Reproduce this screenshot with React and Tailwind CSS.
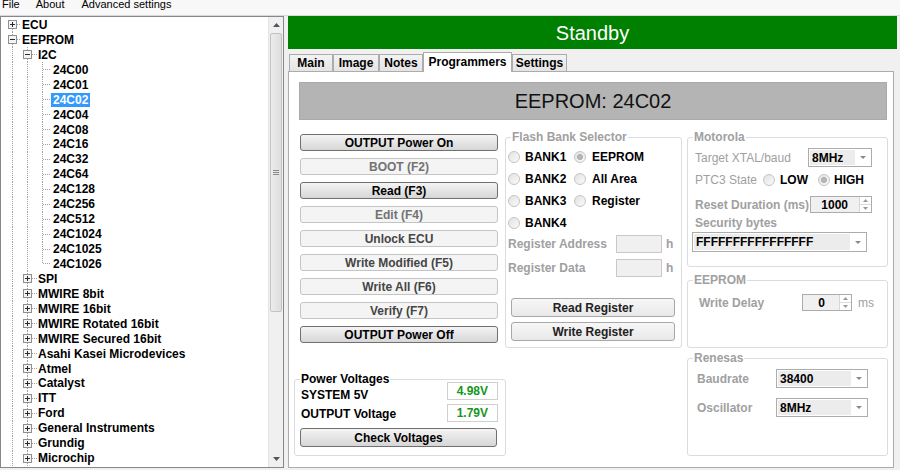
import React from "react";

const TREE = [
  { t: "ECU", l: 1, e: "+" },
  { t: "EEPROM", l: 1, e: "-" },
  { t: "I2C", l: 2, e: "-" },
  { t: "24C00", l: 3 },
  { t: "24C01", l: 3 },
  { t: "24C02", l: 3, sel: true },
  { t: "24C04", l: 3 },
  { t: "24C08", l: 3 },
  { t: "24C16", l: 3 },
  { t: "24C32", l: 3 },
  { t: "24C64", l: 3 },
  { t: "24C128", l: 3 },
  { t: "24C256", l: 3 },
  { t: "24C512", l: 3 },
  { t: "24C1024", l: 3 },
  { t: "24C1025", l: 3 },
  { t: "24C1026", l: 3, last: true },
  { t: "SPI", l: 2, e: "+" },
  { t: "MWIRE 8bit", l: 2, e: "+" },
  { t: "MWIRE 16bit", l: 2, e: "+" },
  { t: "MWIRE Rotated 16bit", l: 2, e: "+" },
  { t: "MWIRE Secured 16bit", l: 2, e: "+" },
  { t: "Asahi Kasei Microdevices", l: 2, e: "+" },
  { t: "Atmel", l: 2, e: "+" },
  { t: "Catalyst", l: 2, e: "+" },
  { t: "ITT", l: 2, e: "+" },
  { t: "Ford", l: 2, e: "+" },
  { t: "General Instruments", l: 2, e: "+" },
  { t: "Grundig", l: 2, e: "+" },
  { t: "Microchip", l: 2, e: "+" },
];

function TreeLines({ row, i }) {
  const w = row.l === 1 ? 20 : row.l === 2 ? 36 : 50;
  const cx = row.l === 1 ? 11.5 : 26.5;
  const dot = { stroke: "#a0a0a0", strokeWidth: 1, strokeDasharray: "1 1" };
  return (
    <svg width={w} height="15" className="shrink-0 block" shapeRendering="crispEdges">
      <line x1="11.5" x2="11.5" y1={i === 0 ? 7.5 : 0} y2="15" {...dot} />
      {i >= 2 && <line x1="26.5" x2="26.5" y1="0" y2="15" {...dot} />}
      {row.l === 3 && <line x1="41.5" x2="41.5" y1="0" y2={row.last ? 7.5 : 15} {...dot} />}
      {row.l === 1 && <line x1="16" x2="20" y1="7.5" y2="7.5" {...dot} />}
      {row.l === 2 && <line x1="31" x2="36" y1="7.5" y2="7.5" {...dot} />}
      {row.l === 3 && <line x1="42" x2="50" y1="7.5" y2="7.5" {...dot} />}
      {row.e && (
        <g>
          <rect x={cx - 4} y="3.5" width="8" height="8" fill="#f4f4f4" stroke="#8f8f8f" />
          <line x1={cx - 2.5} x2={cx + 2.5} y1="7.5" y2="7.5" stroke="#2a2a2a" />
          {row.e === "+" && <line x1={cx} x2={cx} y1="5" y2="10" stroke="#2a2a2a" />}
        </g>
      )}
    </svg>
  );
}

function Tree() {
  return (
    <div className="w-[284px] h-[452px] bg-white border border-[#828790] flex">
      <div className="flex-1 overflow-hidden pt-[0.5px]">
        {TREE.map((row, i) => (
          <div key={row.t} className="flex items-center h-[14.94px]">
            <TreeLines row={row} i={i} />
            <span
              className={`leading-[14px] font-bold text-[12px] whitespace-nowrap ${
                row.l === 3 ? "px-[2px]" : "pl-[1px]"
              } ${row.sel ? "bg-[#3399ff] text-white" : "text-black"}`}
            >
              {row.t}
            </span>
          </div>
        ))}
      </div>
      <div className="w-[15px] border-l border-[#e3e3e3] bg-[#f0f0f0] flex flex-col">
        <div className="h-[16px] flex items-center justify-center">
          <svg width="7" height="4"><path d="M0 4h7L3.5 0z" fill="#555" /></svg>
        </div>
        <div className="h-[279px] mx-[1px] rounded-[2px] border border-[#c3c3c3] bg-linear-to-r from-[#ececec] to-[#dedede] flex items-center justify-center">
          <svg width="6" height="5" className="mt-[-1px]">
            <path d="M0 0.5h6M0 2.5h6M0 4.5h6" stroke="#8a8a8a" strokeWidth="1" />
          </svg>
        </div>
        <div className="flex-1" />
        <div className="h-[16px] flex items-center justify-center">
          <svg width="7" height="4"><path d="M0 0h7L3.5 4z" fill="#555" /></svg>
        </div>
      </div>
    </div>
  );
}

const BTN = {
  on: "border-[#707070] bg-linear-to-b from-[#f4f4f4] to-[#d6d6d6] text-black",
  off: "border-[#c4c4c4] bg-[#f4f4f4] text-[#727272]",
  dim: "border-[#c4c4c4] bg-[#f4f4f4] text-[#454545]",
  mid: "border-[#a8a8a8] bg-linear-to-b from-[#f7f7f7] to-[#e8e8e8] text-[#222]",
};

function Btn({ children, kind = "on", className = "" }) {
  return (
    <div
      className={`flex items-center justify-center border rounded-[3px] font-bold text-[12px] leading-none ${BTN[kind]} ${className}`}
    >
      {children}
    </div>
  );
}

function Group({ title, dark, className = "", children }) {
  return (
    <div className={`relative border border-[#d8dde2] rounded-[3px] ${className}`}>
      <span
        className={`absolute -top-[8px] left-[5px] bg-white px-[1px] text-[12px] leading-[14px] font-bold ${
          dark ? "text-black" : "text-[#a0a0a0]"
        }`}
      >
        {title}
      </span>
      {children}
    </div>
  );
}

function Radio({ checked }) {
  return (
    <span className="w-[12px] h-[12px] rounded-full border border-[#c4c4c4] bg-linear-to-br from-[#e2e2e2] to-[#fafafa] flex items-center justify-center shrink-0">
      {checked && <span className="w-[6px] h-[6px] rounded-full border border-[#a8a8a8] bg-[#b8b8b8]" />}
    </span>
  );
}

function Combo({ value, className = "" }) {
  return (
    <div className={`flex border border-[#acacac] bg-white ${className}`}>
      <div className="flex-1 bg-[#ececec] m-[1px] mr-0 flex items-center pl-[2px] font-bold text-[12px] leading-none text-black">
        {value}
      </div>
      <div className="w-[16px] flex items-center justify-center">
        <svg width="6" height="3"><path d="M0 0h6L3 3z" fill="#8a8a8a" /></svg>
      </div>
    </div>
  );
}

function Num({ value, pad = "pr-[11px]", className = "" }) {
  return (
    <div className={`flex border border-[#acacac] bg-[#f0f0f0] ${className}`}>
      <div className={`flex-1 flex items-center justify-end font-bold text-[12px] leading-none text-black ${pad}`}>
        {value}
      </div>
      <div className="w-[12px] flex flex-col border-l border-[#d6d6d6] bg-white">
        <div className="flex-1 flex items-center justify-center border-b border-[#dcdcdc]">
          <svg width="5" height="3"><path d="M0 3h5L2.5 0z" fill="#9a9a9a" /></svg>
        </div>
        <div className="flex-1 flex items-center justify-center">
          <svg width="5" height="3"><path d="M0 0h5L2.5 3z" fill="#9a9a9a" /></svg>
        </div>
      </div>
    </div>
  );
}

const gray = "text-[12px] leading-[14px] font-bold text-[#a0a0a0] whitespace-nowrap";
const grayReg = "text-[12px] leading-[14px] text-[#a0a0a0] whitespace-nowrap";
const blk = "text-[12px] leading-[14px] font-bold text-black whitespace-nowrap";

function FlashBank() {
  const rows = [
    ["BANK1", "EEPROM", true],
    ["BANK2", "All Area", false],
    ["BANK3", "Register", false],
    ["BANK4", null, false],
  ];
  return (
    <Group title="Flash Bank Selector" className="mt-[17px] w-[177px] h-[211px]">
      <div className="pt-[8px] pl-[2px]">
        {rows.map(([a, b, chk]) => (
          <div key={a} className="flex items-center h-[22px]">
            <div className="w-[66px] flex items-center gap-[5px]">
              <Radio />
              <span className={blk}>{a}</span>
            </div>
            {b && (
              <div className="flex items-center gap-[6px]">
                <Radio checked={chk} />
                <span className={blk}>{b}</span>
              </div>
            )}
          </div>
        ))}
        <div className="mt-[1px] flex items-center h-[18px]">
          <span className={`${gray} w-[108px]`}>Register Address</span>
          <div className="w-[46px] h-[18px] border border-[#c9c9c9] bg-[#f0f0f0]" />
          <span className={`${gray} ml-[4px]`}>h</span>
        </div>
        <div className="mt-[6px] flex items-center h-[18px]">
          <span className={`${gray} w-[108px]`}>Register Data</span>
          <div className="w-[46px] h-[18px] border border-[#c9c9c9] bg-[#f0f0f0]" />
          <span className={`${gray} ml-[4px]`}>h</span>
        </div>
      </div>
      <Btn kind="mid" className="mt-[21px] ml-[5px] w-[164px] h-[19px]">Read Register</Btn>
      <Btn kind="mid" className="mt-[5px] ml-[5px] w-[164px] h-[19px]">Write Register</Btn>
    </Group>
  );
}

function RightGroups() {
  return (
    <div className="ml-[5px] w-[201px] flex flex-col">
      <Group title="Motorola" className="mt-[17px] h-[130px]">
        <div className="mt-[10px] flex items-center h-[19px] pl-[7px]">
          <span className={`${grayReg} w-[113px]`}>Target XTAL/baud</span>
          <Combo value="8MHz" className="w-[64px] h-[19px]" />
        </div>
        <div className="mt-[4px] flex items-center h-[18px] pl-[7px]">
          <span className={`${grayReg} w-[68px]`}>PTC3 State</span>
          <Radio />
          <span className={`${blk} ml-[5px]`}>LOW</span>
          <span className="ml-[10px]">
            <Radio checked />
          </span>
          <span className={`${blk} ml-[4px]`}>HIGH</span>
        </div>
        <div className="mt-[7px] flex items-center h-[17px] pl-[7px]">
          <span className={`${gray} w-[115px]`}>Reset Duration (ms)</span>
          <Num value="1000" className="w-[62px] h-[17px]" />
        </div>
        <div className={`mt-[3px] h-[14px] pl-[7px] ${gray}`}>Security bytes</div>
        <Combo value="FFFFFFFFFFFFFFFF" className="mt-[2px] ml-[4px] w-[175px] h-[20px]" />
      </Group>
      <Group title="EEPROM" className="mt-[13px] h-[68px]">
        <div className="mt-[13px] flex items-center h-[17px] pl-[11px]">
          <span className={`${gray} w-[103px]`}>Write Delay</span>
          <Num value="0" pad="pr-[14px]" className="w-[50px] h-[17px]" />
          <span className={`${grayReg} ml-[6px]`}>ms</span>
        </div>
      </Group>
      <Group title="Renesas" className="mt-[10px] h-[98px]">
        <div className="mt-[10px] flex items-center h-[19px] pl-[9px]">
          <span className={`${gray} w-[79px]`}>Baudrate</span>
          <Combo value="38400" className="w-[92px] h-[19px]" />
        </div>
        <div className="mt-[10px] flex items-center h-[19px] pl-[9px]">
          <span className={`${gray} w-[79px]`}>Oscillator</span>
          <Combo value="8MHz" className="w-[92px] h-[19px]" />
        </div>
      </Group>
    </div>
  );
}

function LeftColumn() {
  const btns = [
    ["OUTPUT Power On", "on"],
    ["BOOT (F2)", "off"],
    ["Read (F3)", "on"],
    ["Edit (F4)", "off"],
    ["Unlock ECU", "dim"],
    ["Write Modified (F5)", "dim"],
    ["Write All (F6)", "dim"],
    ["Verify (F7)", "dim"],
    ["OUTPUT Power Off", "on"],
  ];
  return (
    <div className="w-[211px] flex flex-col shrink-0">
      <div className="mt-[14px] ml-[6px] w-[198px] flex flex-col gap-[7px]">
        {btns.map(([t, k]) => (
          <Btn key={t} kind={k} className="h-[17px]">
            {t}
          </Btn>
        ))}
      </div>
      <Group title="Power Voltages" dark className="mt-[36px] w-[212px] h-[77px]">
        <div className="mt-[2px] flex items-start h-[18px] pl-[6px] pr-[7px]">
          <span className={`${blk} flex-1 mt-[6px]`}>SYSTEM 5V</span>
          <div className="w-[51px] h-[18px] border border-[#cfcfcf] bg-white flex items-center justify-end pr-[9px] font-bold text-[12px] leading-none text-[#15961a]">
            4.98V
          </div>
        </div>
        <div className="mt-[4px] flex items-start h-[18px] pl-[6px] pr-[7px]">
          <span className={`${blk} flex-1 mt-[3px]`}>OUTPUT Voltage</span>
          <div className="w-[51px] h-[18px] border border-[#cfcfcf] bg-white flex items-center justify-end pr-[9px] font-bold text-[12px] leading-none text-[#15961a]">
            1.79V
          </div>
        </div>
        <Btn kind="on" className="mt-[6px] ml-[5px] w-[197px] h-[19px]">
          Check Voltages
        </Btn>
      </Group>
    </div>
  );
}

function Tabs() {
  const tabs = [
    ["Main", "w-[44px]"],
    ["Image", "w-[46px]"],
    ["Notes", "w-[44px]"],
    ["Programmers", "w-[89px]", true],
    ["Settings", "w-[55px]"],
  ];
  return (
    <div className="mt-[3px] h-[19px] flex items-end pl-[1px] relative z-10">
      {tabs.map(([t, w, active]) =>
        active ? (
          <div
            key={t}
            className={`${w} h-[20px] -mb-[1px] border border-b-0 border-[#acacac] bg-white flex justify-center pt-[2px] ${blk}`}
          >
            {t}
          </div>
        ) : (
          <div
            key={t}
            className={`${w} h-[17px] border border-b-0 border-[#acacac] bg-linear-to-b from-[#f3f3f3] to-[#e4e4e4] flex items-center justify-center ${blk}`}
          >
            {t}
          </div>
        )
      )}
    </div>
  );
}

export default function App() {
  return (
    <div className="w-[900px] h-[470px] overflow-hidden bg-[#f0f0f0] [font-family:'Liberation_Sans',Arial,sans-serif] text-black select-none">
      <div className="h-[16px] border-b border-[#d9d9d9] bg-[#f8f8f8] flex items-start text-[11px] leading-[14px] text-black">
        <span className="ml-[2px] -mt-[3px]">File</span>
        <span className="ml-[16px] -mt-[3px]">About</span>
        <span className="ml-[17px] -mt-[3px]">Advanced settings</span>
      </div>
      <div className="flex h-[454px]">
        <Tree />
        <div className="ml-[4px] w-[609px] flex flex-col">
          <div className="h-[33px] bg-[#008000] flex items-center justify-center text-white text-[20px] leading-none">
            Standby
          </div>
          <Tabs />
          <div className="h-[397px] mr-[3px] border border-[#acacac] bg-white">
            <div className="pt-[10px] pl-[10px] pr-[6px]">
              <div className="h-[38px] bg-[#b4b4b4] border border-[#aaaaaa] flex items-center justify-center text-[20px] leading-none text-[#111]">
                EEPROM: 24C02
              </div>
            </div>
            <div className="flex pl-[5px]">
              <LeftColumn />
              <FlashBank />
              <RightGroups />
            </div>
          </div>
        </div>
      </div>
    </div>
  );
}
